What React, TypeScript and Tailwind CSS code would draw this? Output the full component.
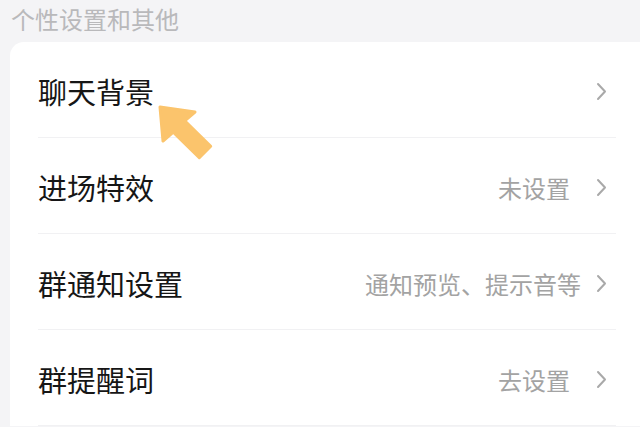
const rows = [
  { label: "聊天背景", value: "", gap: "mr-[26px]" },
  { label: "进场特效", value: "未设置", gap: "mr-[26px]" },
  { label: "群通知设置", value: "通知预览、提示音等", gap: "mr-[15px]" },
  { label: "群提醒词", value: "去设置", gap: "mr-[26px]" },
];

function Chevron() {
  return (
    <svg width="11" height="19" viewBox="0 0 11 19" className="shrink-0">
      <path d="M2 2 L9 9.5 L2 17" fill="none" stroke="#a9a9a9" strokeWidth="2" strokeLinecap="round" strokeLinejoin="round" />
    </svg>
  );
}

export default function App() {
  return (
    <div
      className="relative w-[640px] h-[427px] overflow-hidden bg-[#f4f4f6]"
      style={{ fontFamily: '"Noto Sans CJK SC", "Noto Sans", sans-serif' }}
    >
      <div className="h-[38px] pl-[11px] flex items-center text-[24px] text-[#b9b9bb]">个性设置和其他</div>
      <div className="ml-[10px] mt-[4px] w-[650px] rounded-tl-[14px] bg-white">
        {rows.map((r) => (
          <div key={r.label}>
            <div className="h-[95px] pl-[28px] pr-[53px] pt-[4px] flex items-center">
              <span className="flex-1 text-[29px] text-[#161616]">{r.label}</span>
              {r.value && <span className={`text-[24px] text-[#a3a3a3] ${r.gap}`}>{r.value}</span>}
              <Chevron />
            </div>
            <div className="ml-[28px] mr-[44px] h-px bg-[#f1f1f3]" />
          </div>
        ))}
      </div>
      <svg className="absolute left-[155px] top-[100px]" width="62" height="62" viewBox="0 0 62 62">
        <polygon
          points="5,7 40,12 29.7,20.8 55.7,46.3 44.3,57.7 18.3,32.2 8,41"
          fill="#fbc46c"
          stroke="#fbc46c"
          strokeWidth="3"
          strokeLinejoin="round"
        />
      </svg>
    </div>
  );
}
